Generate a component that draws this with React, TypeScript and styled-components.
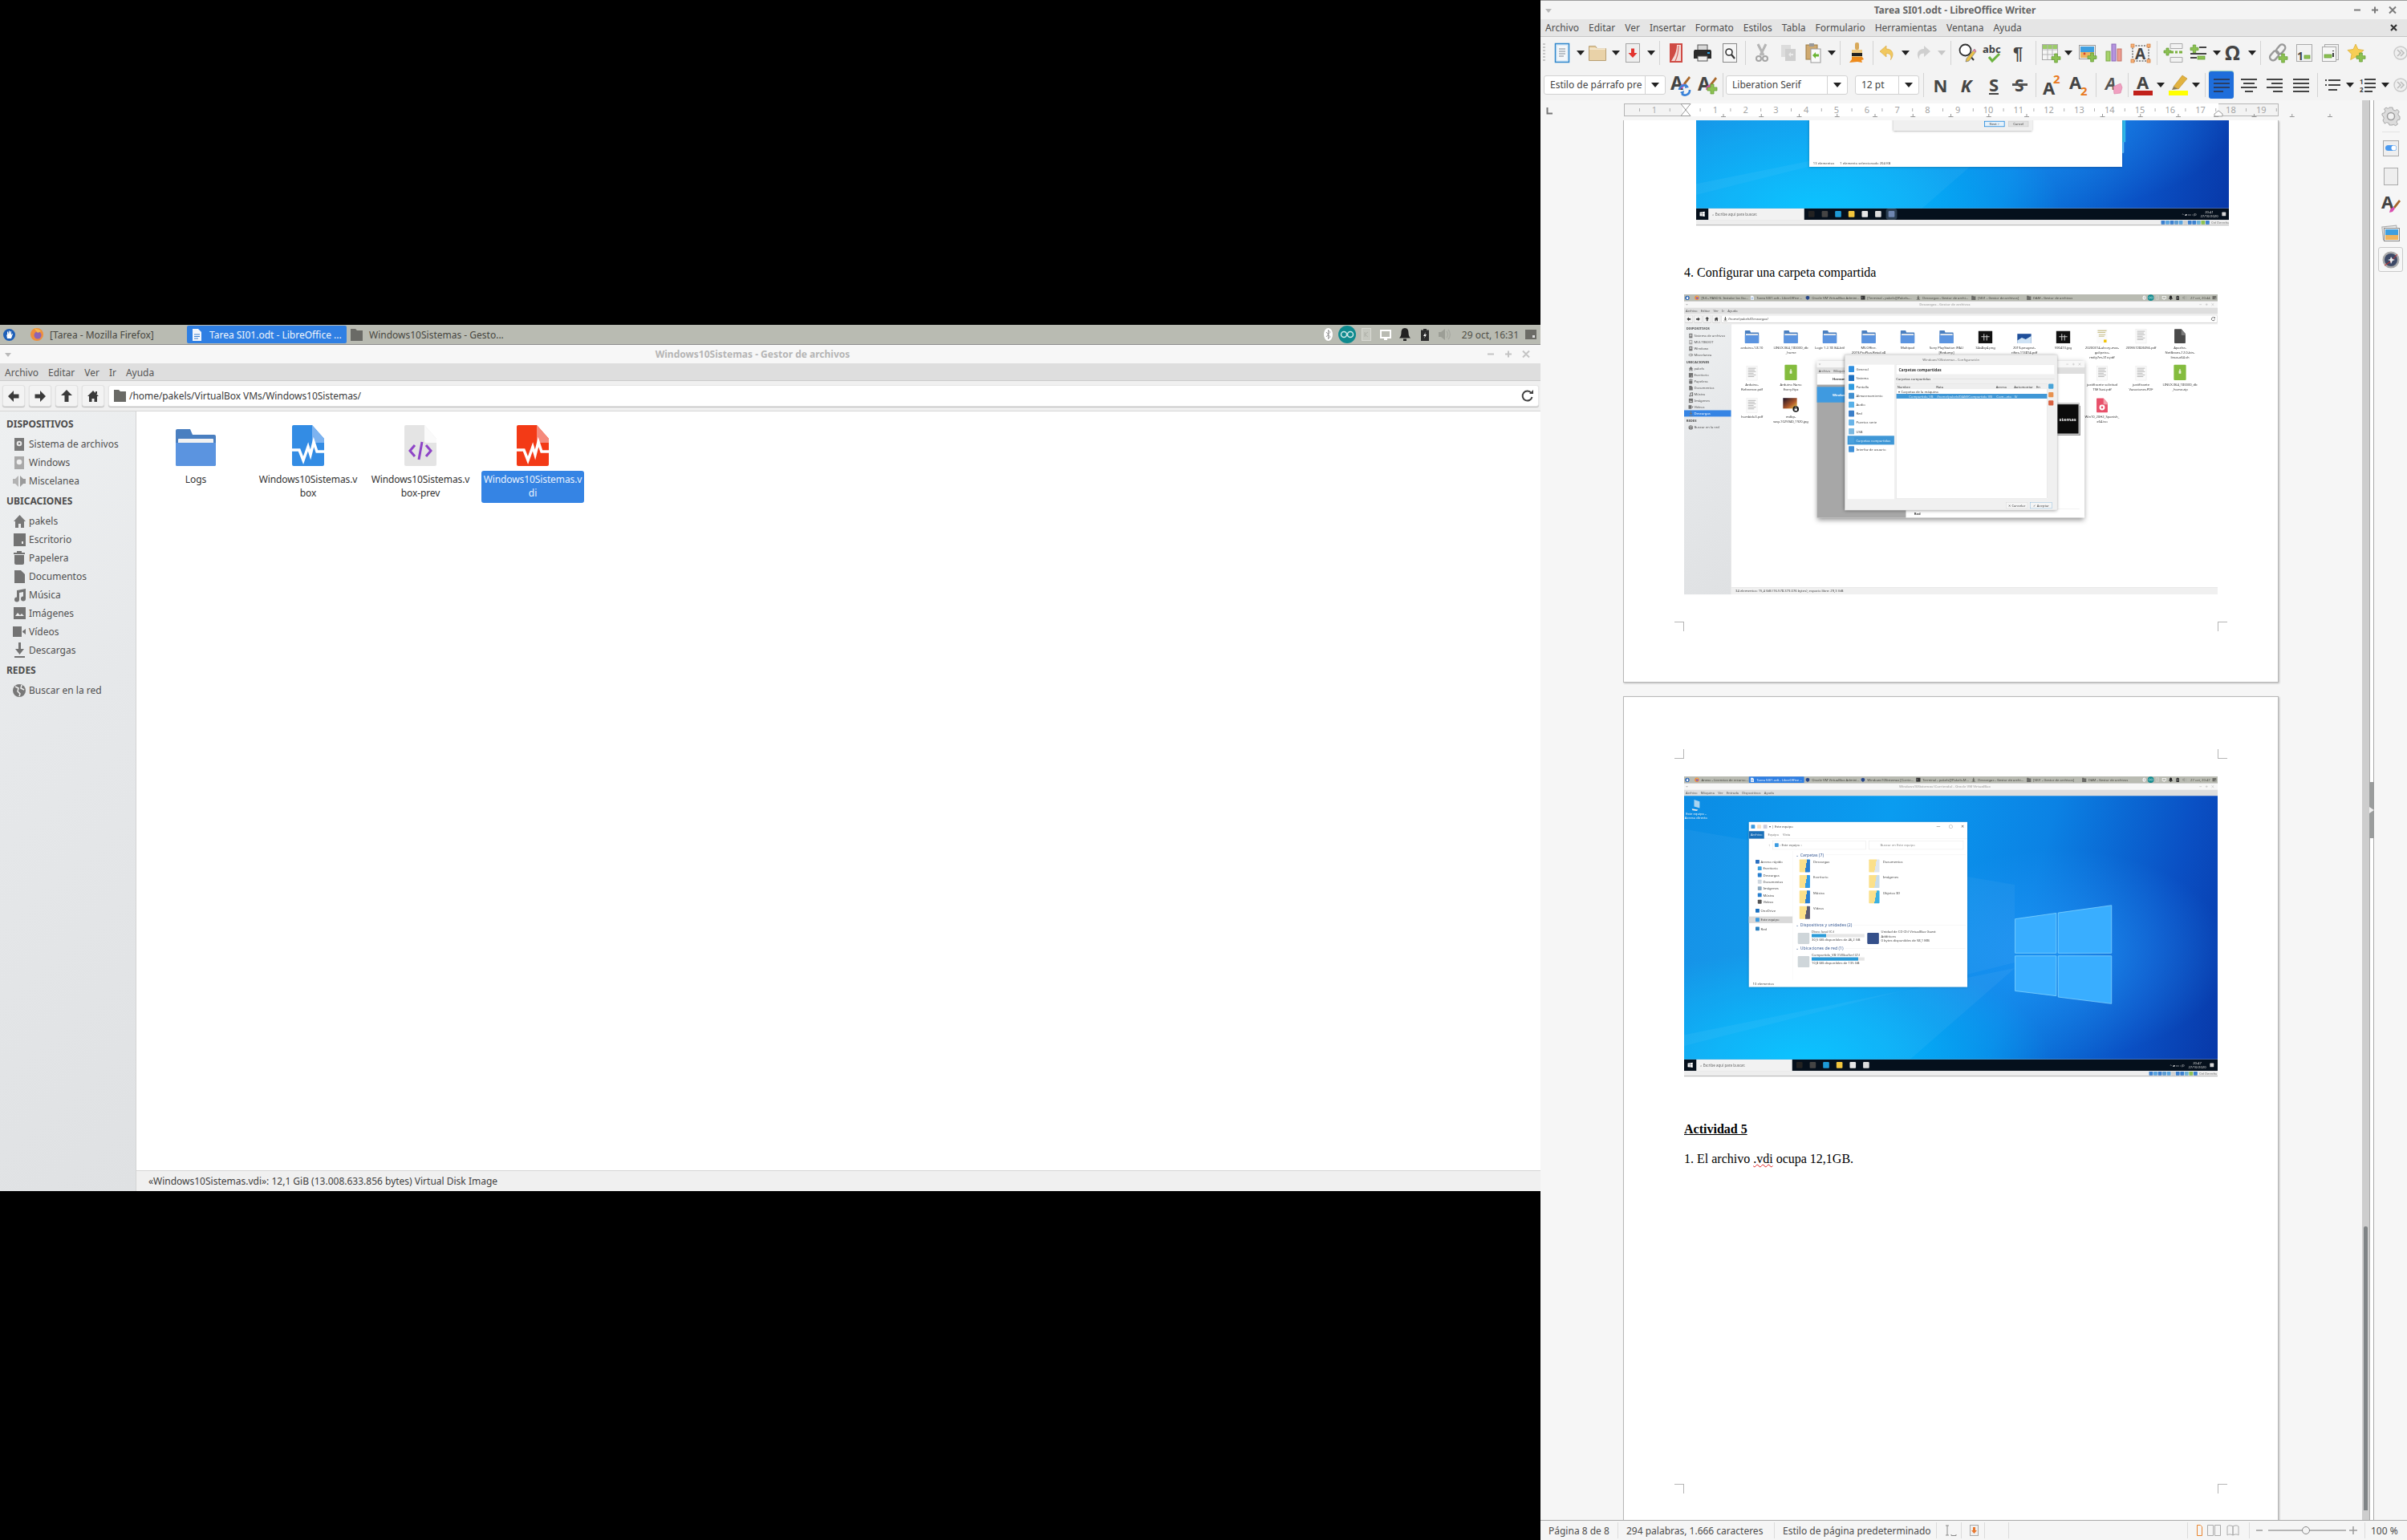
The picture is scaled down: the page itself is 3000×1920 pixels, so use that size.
import React from 'react';
import styled, { createGlobalStyle } from 'styled-components';

const Global = createGlobalStyle`
  html, body { margin: 0; padding: 0; background: #000; }
  body { width: 3000px; height: 1920px; overflow: hidden; font-family: "Noto Sans", sans-serif; font-size: 12px; }
  * { box-sizing: border-box; }
  svg { display: block; flex: none; overflow: visible; }
`;

/* ------------- generic svg ------------- */
const Svg: React.FC<{ w: number; h: number; children?: React.ReactNode }> = ({ w, h, children }) => (
  <svg width={w} height={h} viewBox={`0 0 ${w} ${h}`}>{children}</svg>
);
const Plus: React.FC<{ x: number; y: number; s?: number }> = ({ x, y, s = 11 }) => (
  <path d={`M${x + s * 0.33} ${y}h${s * 0.34}v${s * 0.33}h${s * 0.33}v${s * 0.34}h${-s * 0.33}v${s * 0.33}h${-s * 0.34}v${-s * 0.33}h${-s * 0.33}v${-s * 0.34}h${s * 0.33}z`} fill="#8cc152" stroke="#5f9a2e" strokeWidth=".7" />
);
const Minus: React.FC<{ x: number; y: number; w: number }> = ({ x, y, w }) => (
  <rect x={x} y={y} width={w} height="4" fill="#8cc152" stroke="#5f9a2e" strokeWidth=".7" />
);
const Brush: React.FC<{ x: number; y: number }> = ({ x, y }) => (
  <g transform={`translate(${x} ${y})`}>
    <path d="M12 0 L5 9 L7 11 L14 2Z" fill="#a8672a" />
    <path d="M5 9 L1 12 L0 16 L4 15 L7 11Z" fill="#d94fb0" />
  </g>
);

/* ------------- writer toolbar icons ------------- */
const I = {
  newDoc: <Svg w={18} h={24}><rect x=".5" y=".5" width="17" height="23" fill="#dcebf7" stroke="#2f86cc" strokeWidth="1.500" /><rect x="3" y="3" width="12" height="18" fill="#f4f7fa" /><path d="M5 7h8M5 10h8M5 13h8M5 16h6" stroke="#a5afb7" strokeWidth="1.400" /></Svg>,
  open: <Svg w={22} h={20}><path d="M.5 19.500V1.500h8l2 3h11v15z" fill="#e9d2a8" stroke="#b89f74" /><path d="M1 5h20" stroke="#f7ecd8" strokeWidth="1.500" /></Svg>,
  save: <Svg w={18} h={24}><rect x=".5" y=".5" width="17" height="23" fill="#eee" stroke="#a5a5a5" /><path d="M9 18L3.500 12H7V6.500h4V12h3.500z" fill="#e3342f" /></Svg>,
  pdf: <Svg w={16} h={24}><rect width="16" height="24" fill="#cf4a44" /><path d="M9 2C9 10 6 16 2 22h12V2z" fill="#f4dad7" /><path d="M11 3c0 7-1 13-4 19" fill="none" stroke="#d8655f" strokeWidth="1.200" /></Svg>,
  print: <Svg w={22} h={20}><rect x="5" y="0" width="12" height="7" fill="#d8d8d8" stroke="#555" /><path d="M1 6h20l1 2v9H0V8z" fill="#2b2b2b" /><rect x="5" y="14" width="12" height="6" fill="#eee" stroke="#555" /><rect x="17" y="9" width="3" height="2" fill="#2fa3e6" /></Svg>,
  preview: <Svg w={18} h={24}><rect x=".5" y=".5" width="17" height="23" fill="#f6f6f6" stroke="#8a8a8a" /><circle cx="8" cy="11" r="4" fill="#fff" stroke="#333" strokeWidth="1.600" /><path d="M11 14l4 5" stroke="#333" strokeWidth="2.200" /></Svg>,
  cut: <Svg w={16} h={22}><path d="M3 0l7 14M13 0L6 14" stroke="#b5b5b5" strokeWidth="3" /><circle cx="4" cy="18" r="3" fill="none" stroke="#a5a5a5" strokeWidth="2" /><circle cx="12" cy="18" r="3" fill="none" stroke="#a5a5a5" strokeWidth="2" /></Svg>,
  copy: <Svg w={18} h={20}><rect y="0" width="12" height="15" fill="#dcdcdc" /><rect x="5" y="5" width="13" height="15" fill="#cfcfcf" /><path d="M9 12l3-3v2h3v2h-3v2z" fill="#eaeaea" /></Svg>,
  paste: <Svg w={18} h={24}><rect y="2" width="14" height="18" fill="#cfa96f" stroke="#9c7c47" /><rect x="4" y="0" width="6" height="4" fill="#999" /><rect x="6" y="7" width="12" height="17" fill="#fafafa" stroke="#999" /><path d="M8 15l4-4v2.500h4v3h-4V19z" fill="#6ab533" /></Svg>,
  brush: <Svg w={20} h={26}><rect x="8" y="0" width="5" height="9" rx="2" fill="#d8a95a" /><rect x="4" y="9" width="13" height="9" fill="#efc97f" /><rect x="4" y="13" width="13" height="4" fill="#222" /><path d="M4 18h13l2 3-3 1 1 3-6-1-10 1 3-4z" fill="#ee8b1c" /></Svg>,
  undo: <Svg w={18} h={18}><path d="M8 0L0 7l8 7V9.500c5 0 7 3 5.500 8C18.500 11 16 4 8 4z" fill="#f1c85f" stroke="#d7a63c" strokeWidth=".6" /></Svg>,
  redo: <Svg w={18} h={18}><path d="M10 0l8 7-8 7V9.500c-5 0-7 3-5.500 8C-.5 11 2 4 10 4z" fill="#cfcfcf" /></Svg>,
  find: <Svg w={22} h={24}><circle cx="8.500" cy="8.500" r="7" fill="#fff" stroke="#333" strokeWidth="1.800" /><path d="M13 14l6 7" stroke="#333" strokeWidth="2" /><path d="M20 7L10 19l-1 4 4-1L22 10z" fill="#e9c14a" stroke="#666" strokeWidth=".6" /><path d="M20 7l2 3 -2 1 -2-2z" fill="#df7fb4" /></Svg>,
  spell: <Svg w={26} h={26}><text x="0" y="13" fontFamily="Noto Sans" fontWeight="700" fontSize="13" fill="#444">abc</text><path d="M8 18l4 5 9-9" fill="none" stroke="#6cb33f" strokeWidth="3" /></Svg>,
  pilcrow: <Svg w={16} h={24}><text x="0" y="20" fontFamily="Liberation Sans" fontWeight="700" fontSize="22" fill="#444">¶</text></Svg>,
  table: <Svg w={23} h={23}><rect x=".5" y=".5" width="19" height="19" fill="#f6f6f6" stroke="#a9a9a9" /><rect x="1" y="1" width="18" height="5" fill="#9ccb6a" /><path d="M7 1v18M13 1v18M1 7h18M1 13h18" stroke="#b5b5b5" /><Plus x={12} y={12} /></Svg>,
  image: <Svg w={22} h={21}><rect x=".5" y=".5" width="20" height="17" fill="#f2f2f2" stroke="#9a9a9a" /><rect x="2" y="2" width="17" height="7" fill="#3f9fe0" /><rect x="2" y="9" width="17" height="7" fill="#efb45f" /><circle cx="7" cy="11" r="1.400" fill="#d8432f" /><Plus x={11} y={10} /></Svg>,
  chart: <Svg w={20} h={22}><rect x="0" y="9" width="5" height="12" fill="#a6d26a" stroke="#7aa746" /><rect x="7" y="0" width="5" height="21" fill="#b594de" stroke="#8a69ba" /><rect x="14" y="6" width="5" height="15" fill="#ed9c90" stroke="#c47467" /></Svg>,
  box: <Svg w={24} h={23}><rect x="2" y="2" width="20" height="19" fill="none" stroke="#333" strokeDasharray="2 1.500" /><text x="5" y="19" fontFamily="Noto Sans" fontWeight="700" fontSize="19" fill="#444">A</text>{[[0, 0], [20, 0], [0, 19], [20, 19]].map(([x, y], i) => <rect key={i} x={x} y={y} width="4" height="4" fill="#f6b27a" stroke="#d47a36" strokeWidth=".7" />)}</Svg>,
  pb: <Svg w={24} h={24}><path d="M8 .5h15v6H8zM8 17.500h15v6H8z" fill="#f2f2f2" stroke="#aaa" /><Plus x={0} y={6} s={9} /><path d="M9 11h3M14 11h3M19 11h4" stroke="#7cb13f" strokeWidth="3" /></Svg>,
  field: <Svg w={20} h={20}><Plus x={0} y={0} s={10} /><path d="M11 3h9M0 11h20" stroke="#444" strokeWidth="2" /><path d="M0 16h8" stroke="#444" strokeWidth="2" /><Minus x={9} y={14} w={9} /></Svg>,
  omega: <Svg w={20} h={24}><text x="-1" y="21" fontFamily="Noto Sans" fontWeight="700" fontSize="25" fill="#444">Ω</text></Svg>,
  link: <Svg w={23} h={23}><g fill="none" stroke="#999" strokeWidth="2.400"><rect x="11" y="0" width="8" height="13" rx="4" transform="rotate(40 15 6)" /><rect x="3" y="8" width="8" height="13" rx="4" transform="rotate(40 7 14)" /></g><Plus x={12} y={12} /></Svg>,
  footnote: <Svg w={20} h={22}><rect x=".5" y=".5" width="19" height="21" fill="#f2f2f2" stroke="#aaa" /><text x="1" y="20" fontFamily="Noto Sans" fontWeight="700" fontSize="14" fill="#444">1</text><Minus x={10} y={14} w={7} /></Svg>,
  endnote: <Svg w={21} h={22}><rect x="3.500" y=".5" width="17" height="19" fill="#eee" stroke="#aaa" /><rect x=".5" y="3.500" width="17" height="18" fill="#f6f6f6" stroke="#aaa" /><Minus x={3} y={13} w={9} /><path d="M14 8v1M14 11v5" stroke="#444" strokeWidth="2" /></Svg>,
  star: <Svg w={22} h={22}><path d="M10 0l3 6.500 7 1-5 5 1.300 7L10 16l-6.300 3.500L5 12.500l-5-5 7-1z" fill="#f7ce55" stroke="#d9a92d" strokeWidth=".7" /><Plus x={11} y={11} /></Svg>,
  more: <Svg w={18} h={18}><circle cx="9" cy="9" r="8" fill="#efefef" stroke="#c9c9c9" strokeWidth="1.400" /><path d="M5 5l4 4-4 4M9 5l4 4-4 4" fill="none" stroke="#bdbdbd" strokeWidth="1.600" /></Svg>,
  updStyle: <Svg w={25} h={26}><text x="0" y="19" fontFamily="Noto Sans" fontWeight="700" fontSize="23" fill="#444">A</text><Brush x={11} y={2} /><path d="M11 19a6 6 0 0 1 10-4M24 19a6 6 0 0 1-10 5" fill="none" stroke="#3a82d8" strokeWidth="2.600" /><path d="M19 11l4 5-5 1zM16 26l-4-4 5-2z" fill="#3a82d8" /></Svg>,
  newStyle: <Svg w={24} h={24}><text x="0" y="19" fontFamily="Noto Sans" fontWeight="700" fontSize="23" fill="#444">A</text><Brush x={10} y={2} /><Plus x={12} y={11} s={12} /></Svg>,
  strike: <Svg w={19} h={22}><text x="3" y="19" fontFamily="Noto Sans" fontWeight="700" fontSize="21" fill="#444">S</text><rect y="9" width="19" height="3" fill="#555" /></Svg>,
  sup: <Svg w={23} h={26}><text x="0" y="25" fontFamily="Noto Sans" fontWeight="700" fontSize="22" fill="#444">A</text><text x="13" y="11" fontFamily="Noto Sans" fontWeight="700" fontSize="15" fill="#e8791c">2</text></Svg>,
  sub: <Svg w={25} h={26}><text x="0" y="18" fontFamily="Noto Sans" fontWeight="700" fontSize="22" fill="#444">A</text><text x="14" y="26" fontFamily="Noto Sans" fontWeight="700" fontSize="15" fill="#e8791c">2</text></Svg>,
  clear: <Svg w={22} h={24}><text x="1" y="18" fontFamily="Noto Sans" fontWeight="700" fontStyle="italic" fontSize="21" fill="#555">A</text><path d="M11 14l9-4 2 5-2 7-8 1z" fill="#f09fc0" stroke="#d67aa0" strokeWidth=".6" /></Svg>,
  color: <Svg w={24} h={26}><text x="4" y="18" fontFamily="Noto Sans" fontWeight="700" fontSize="22" fill="#444">A</text><rect y="20" width="24" height="6" fill="#c1201a" /></Svg>,
  high: <Svg w={24} h={26}><path d="M6 15L17 1l6 4-11 13z" fill="#e2b23f" stroke="#b78a24" strokeWidth=".6" /><path d="M4 19l2-4 6 3z" fill="#8a7a50" /><rect y="20" width="24" height="6" fill="#ffff00" /></Svg>,
  caret: <Svg w={10} h={6}><path d="M0 0h10L5 6z" fill="#222" /></Svg>,
  caretGrey: <Svg w={10} h={6}><path d="M0 0h10L5 6z" fill="#c7c7c7" /></Svg>,
  bullets: <Svg w={20} h={18}><path d="M5 3h15M5 9h15M5 15h11" stroke="#444" strokeWidth="2" /><path d="M1 2h2v2H1zM1 8h2v2H1z" fill="#444" /></Svg>,
  numbers: <Svg w={20} h={20}><text x="0" y="9" fontFamily="Noto Sans" fontWeight="700" fontSize="8" fill="#444">1</text><text x="0" y="19" fontFamily="Noto Sans" fontWeight="700" fontSize="8" fill="#444">2</text><path d="M6 3h14M6 8h14M6 13h14M6 18h10" stroke="#444" strokeWidth="2" /></Svg>,
  gear: <Svg w={22} h={22}><path d="M9 0h4l.7 3 2.600 1 2.500-1.500 2.500 2.800L19.700 8l1 2.500 1.300.5v4l-3 .7-1 2.500 1.500 2.500-2.800 2-2.200-1.300-2.500.6H9l-.7-2.400-2.600-1-2.500 1.500L1 16l1.300-2.500-1-2.600L0 10V7.500l3-.8 1-2.600L2.500 1.900 5 .1l2.400 1.300z" fill="#dcdcdc" stroke="#a8a8a8" /><circle cx="11" cy="11" r="4.500" fill="#f2f2f2" stroke="#9c9c9c" strokeWidth="1.500" /></Svg>,
  toggle: <Svg w={20} h={20}><rect x=".5" y=".5" width="19" height="19" fill="#eee" stroke="#aaa" /><rect x="3" y="6" width="14" height="7" rx="3.500" fill="#4a9af0" /><circle cx="13.500" cy="9.500" r="3" fill="#fff" /></Svg>,
  page: <Svg w={18} h={22}><rect x=".5" y=".5" width="17" height="21" fill="#eee" stroke="#aaa" /></Svg>,
  deckStyle: <Svg w={24} h={24}><text x="0" y="17" fontFamily="Noto Sans" fontWeight="700" fontSize="22" fill="#444">A</text><Brush x={10} y={6} /></Svg>,
  gallery: <Svg w={22} h={22}><rect x=".5" y="3" width="18" height="16" fill="#eee" stroke="#aaa" transform="rotate(-6 10 10)" /><rect x="2.500" y="5.500" width="19" height="16" fill="#f0f0f0" stroke="#888" /><rect x="4" y="7" width="16" height="7" fill="#3f9fe0" /><rect x="4" y="14" width="16" height="6" fill="#efb45f" /></Svg>,
  nav: <Svg w={22} h={22}><circle cx="11" cy="11" r="10.500" fill="#aaa" /><circle cx="11" cy="11" r="8" fill="#3d4966" /><path d="M19 4L12 12 3 18" fill="none" stroke="#cc2b2b" /><path d="M11 7l2 3 3 1-3 1-2 4-1-4-3-1 3-1z" fill="#eee" /></Svg>,
};

/* ------------- file icons ------------- */
const Wave = <path d="M0 31h9l5 13 6-17 3 10 4-16 4 12h9" fill="none" stroke="#fff" strokeWidth="3.500" />;
const DocShape: React.FC<{ c: string; f: string; children?: React.ReactNode }> = ({ c, f, children }) => (
  <svg width="40" height="51" viewBox="0 0 40 51">
    <path d="M2 0h23l15 17v32a2 2 0 0 1-2 2H2a2 2 0 0 1-2-2V2a2 2 0 0 1 2-2z" fill={c} />
    <path d="M25 0l15 17v5H27a2 2 0 0 1-2-2z" fill={f} />
    {children}
  </svg>
);
const FolderBig = (
  <svg width="50" height="46" viewBox="0 0 50 46">
    <path d="M2 0h16l3 7h27a2 2 0 0 1 2 2v35a2 2 0 0 1-2 2H2a2 2 0 0 1-2-2V2a2 2 0 0 1 2-2z" fill="#4a7fc0" />
    <rect x="3" y="12" width="44" height="9" rx="1" fill="#f2f2f2" />
    <path d="M0 17h50v27a2 2 0 0 1-2 2H2a2 2 0 0 1-2-2z" fill="#5b94e0" />
  </svg>
);
const fileIcons: Record<string, React.ReactNode> = {
  folder: FolderBig,
  vbox: <DocShape c="#338ce4" f="#7db3f0">{Wave}</DocShape>,
  vdi: <DocShape c="#f33a16" f="#f58a7c">{Wave}</DocShape>,
  prev: <DocShape c="#e4e4e4" f="#fafafa"><path d="M13 25l-6 7 6 7M27 25l6 7-6 7" fill="none" stroke="#8e44c7" strokeWidth="3" /><path d="M22 21l-4 22" stroke="#8e44c7" strokeWidth="3" /></DocShape>,
  page: <svg width="40" height="51" viewBox="0 0 40 51"><rect x="1" y="0" width="38" height="51" fill="#fafafa" stroke="#ddd" /><path d="M6 8h28M6 14h24M6 20h28M6 26h20M6 32h28M6 38h22" stroke="#9a9a9a" strokeWidth="2" /></svg>,
  yellow: <svg width="40" height="51" viewBox="0 0 40 51"><rect x="1" y="0" width="38" height="51" fill="#fafafa" /><path d="M4 6h32M4 12h28M8 20h24M8 26h20" stroke="#c9c08a" strokeWidth="3" /><rect x="26" y="38" width="10" height="10" fill="#f2c300" /></svg>,
  dark: <svg width="50" height="44" viewBox="0 0 50 44"><rect width="50" height="44" fill="#111" /><path d="M10 20h30M20 10v24M30 14v20" stroke="#ccc" strokeWidth="3" /></svg>,
  blue: <svg width="50" height="34" viewBox="0 0 50 34"><rect width="50" height="34" fill="#1f4f9a" /><path d="M0 24l16-10 14 6 20-12v26H0z" fill="#cfe3f5" /></svg>,
  script: <DocShape c="#4a4a4a" f="#7a7a7a" />,
  green: <svg width="44" height="56" viewBox="0 0 44 56"><rect width="44" height="56" rx="3" fill="#84bc3e" /><rect x="20" y="16" width="4" height="16" fill="#e8f2d8" /><rect x="18" y="22" width="8" height="10" fill="#e8f2d8" /></svg>,
  pink: <DocShape c="#e8506a" f="#f2a0ac"><circle cx="20" cy="33" r="10" fill="#fff" /><circle cx="20" cy="33" r="4" fill="#e8506a" /></DocShape>,
  lock: <svg width="56" height="52" viewBox="0 0 56 52"><defs><linearGradient id="lk" x1="0" y1="0" x2="1" y2="1"><stop offset="0" stopColor="#1a1026" /><stop offset=".6" stopColor="#b25a2a" /><stop offset="1" stopColor="#e6cf52" /></linearGradient></defs><rect width="50" height="38" fill="url(#lk)" /><circle cx="46" cy="40" r="11" fill="#111" /><rect x="41" y="38" width="10" height="8" fill="#eee" /><path d="M43 38v-3a3 3 0 0 1 6 0v3" fill="none" stroke="#eee" strokeWidth="1.600" /></svg>,
  none: null,
};

/* ------------- sidebar icons ------------- */
const sideIcons: Record<string, React.ReactNode> = {
  disk: <Svg w={14} h={16}><path d="M1 0h12v16H1z" fill="#787878" /><circle cx="7" cy="7" r="3.300" fill="#e8e8e8" /><circle cx="7" cy="7" r="1.200" fill="#787878" /></Svg>,
  diskLight: <Svg w={14} h={16}><path d="M1 0h12v16H1z" fill="#a9a9a9" /><circle cx="7" cy="7" r="3.300" fill="#eee" /></Svg>,
  speaker: <Svg w={16} h={16}><path d="M7 1v14L3 11H0V5h3z" fill="#b3b3b3" /><path d="M9 1v14l4-4h3V5h-3z" fill="#9b9b9b" /></Svg>,
  home: <Svg w={15} h={16}><path d="M7.500 0L15 8h-2v8H9v-5H6v5H2V8H0z" fill="#787878" /></Svg>,
  desk: <Svg w={15} h={16}><rect width="15" height="16" fill="#737373" /><rect x="10" y="10" width="2" height="3" fill="#eee" /></Svg>,
  trash: <Svg w={14} h={17}><rect x="4" y="0" width="6" height="2" fill="#737373" /><rect y="2" width="14" height="2" fill="#737373" /><path d="M1 5h12v10a2 2 0 0 1-2 2H3a2 2 0 0 1-2-2z" fill="#737373" /></Svg>,
  doc: <Svg w={13} h={16}><path d="M0 0h8l5 5v11H0z" fill="#737373" /></Svg>,
  music: <Svg w={15} h={16}><path d="M4 2l11-2v12h-3V4L7 5v9H4z" fill="#737373" /><circle cx="4" cy="13.500" r="3" fill="#737373" /><circle cx="12" cy="12.500" r="3" fill="#737373" /></Svg>,
  img: <Svg w={15} h={15}><rect width="15" height="15" fill="#737373" /><path d="M2 11l3-4 3 3 2-2 3 3z" fill="#eee" /></Svg>,
  video: <Svg w={16} h={13}><rect width="11" height="13" fill="#737373" /><path d="M12 6l4-3v7l-4-3z" fill="#737373" /></Svg>,
  down: <Svg w={13} h={19}><path d="M5 0h3v8h4l-5.500 7L1 8h4z" fill="#737373" /><rect y="17" width="13" height="2" fill="#737373" /></Svg>,
  globe: <Svg w={16} h={16}><circle cx="8" cy="8" r="8" fill="#787878" /><path d="M3 3l4 2-1 4 3 3-1 3M11 1l-1 4 4 2" fill="none" stroke="#eee" strokeWidth="1.500" /></Svg>,
};

/* ------------- panel ------------- */
const PanelBar = styled.div`
  height: 25px; flex: none; display: flex; align-items: center; padding: 0 5px 0 4px;
  background: #b9bbb2; border-bottom: 1px solid #8d8d8d; font-size: 12px; color: #474741;
`;
const StartBtn = styled.div`width: 15px; margin-right: 15px; flex: none;`;
const Task = styled.div<{ $active?: boolean }>`
  width: 199px; height: 22px; flex: none; display: flex; align-items: center; gap: 8px; padding-left: 4px; white-space: nowrap; overflow: hidden;
  border-radius: 2px; background: ${p => (p.$active ? '#2f7fe3' : 'transparent')}; color: ${p => (p.$active ? '#f2f6fb' : '#474741')};
`;
const TaskIcon = styled.span`width: 16px; flex: none; display: flex; justify-content: center;`;
const Tray = styled.div`margin-left: auto; display: flex; align-items: center;`;
const TrayItem = styled.div<{ $ml: number }>`margin-left: ${p => p.$ml}px; flex: none; display: flex;`;
const Clock = styled.span`color: #505048; white-space: nowrap; font-size: 12px;`;

const startIcon = <Svg w={15} h={15}><circle cx="7.500" cy="7.500" r="7.500" fill="#1d5fb8" /><path d="M4 7l1 5h5l2-6-1 0-1 2V3H9v4L8 2.500H7V7L6 3.500H5V8z" fill="#fff" /></Svg>;
const ffIcon = <Svg w={16} h={16}><circle cx="8" cy="8" r="8" fill="#ef8f3c" /><circle cx="9" cy="9" r="4.500" fill="#8d63b4" /><path d="M4 0c3 1 7 1 9 4L9 6z" fill="#f5b64e" /></Svg>;
const docIcon = <Svg w={11} h={15}><path d="M0 0h7l4 4v11H0z" fill="#f3f6fb" /><path d="M2 7h7M2 9.500h7M2 12h5" stroke="#3a7fd0" /></Svg>;
const greyFolder = <Svg w={15} h={15}><path d="M0 0h6l2 2h7v13H0z" fill="#6a6a66" /></Svg>;
const vmIcon = <Svg w={15} h={15}><path d="M7.500 0L14 3v7l-6.500 5L1 10V3z" fill="#26468a" /></Svg>;
const termIcon = <Svg w={15} h={14}><rect width="15" height="14" fill="#333" /><path d="M3 4l3 3-3 3" fill="none" stroke="#fff" /></Svg>;
const dlIcon = <Svg w={13} h={15}><path d="M5 0h3v7h4L6.500 13 1 7h4zM0 13.500h13V15H0z" fill="#595954" /></Svg>;

const trayIcons = (
  <>
    <TrayItem $ml={0}><Svg w={11} h={16}><ellipse cx="5.500" cy="8" rx="5.500" ry="8" fill="#fff" /><path d="M3 5l5 6-2.500 2.500v-11L8 5 3 11" fill="none" stroke="#9a9a9a" /></Svg></TrayItem>
    <TrayItem $ml={7}><Svg w={22} h={22}><circle cx="11" cy="11" r="11" fill="#0f8a8e" /><circle cx="7" cy="11" r="3.500" fill="none" stroke="#cfe8e8" strokeWidth="1.500" /><circle cx="15" cy="11" r="3.500" fill="none" stroke="#cfe8e8" strokeWidth="1.500" /></Svg></TrayItem>
    <TrayItem $ml={7}><Svg w={12} h={16}><rect x=".5" y=".5" width="11" height="15" fill="#c6c8c0" stroke="#d8d9d3" /><path d="M4 5v6M8 5L4 8l4 3" stroke="#aeb0a8" fill="none" /></Svg></TrayItem>
    <TrayItem $ml={11}><Svg w={14} h={13}><rect x="1" y="1" width="12" height="9" fill="#b9bbb2" stroke="#fff" strokeWidth="2" /><rect x="5" y="11" width="4" height="2" fill="#fff" /></Svg></TrayItem>
    <TrayItem $ml={10}><Svg w={14} h={16}><path d="M7 0c3.500 0 4.500 3 4.500 6 0 3 1 5 2.500 6.500H0C1.500 11 2.500 9 2.500 6 2.500 3 3.500 0 7 0z" fill="#222" /><rect x="5" y="13.500" width="4" height="2.500" fill="#222" /></Svg></TrayItem>
    <TrayItem $ml={13}><Svg w={10} h={15}><path d="M3 0h4v1.500h3V15H0V1.500h3z" fill="#2d2d2d" /><path d="M6 4L3 9h2l-1 3 3-5H5z" fill="#fff" /></Svg></TrayItem>
    <TrayItem $ml={12}><Svg w={14} h={14}><path d="M0 4h3l5-4v14l-5-4H0z" fill="#9c9e96" /><path d="M10 3c2 2 2 6 0 8M12 1c3 3 3 9 0 12" fill="none" stroke="#a6a8a0" strokeWidth="1.300" /></Svg></TrayItem>
  </>
);

type TaskDef = { icon: React.ReactNode; label: string; active?: boolean };
const Panel: React.FC<{ tasks: TaskDef[]; clock: string }> = ({ tasks, clock }) => (
  <PanelBar>
    <StartBtn>{startIcon}</StartBtn>
    {tasks.map((t, i) => <Task key={i} $active={t.active}><TaskIcon>{t.icon}</TaskIcon>{t.label}</Task>)}
    <Tray>
      {trayIcons}
      <TrayItem $ml={15}><Clock>{clock}</Clock></TrayItem>
      <TrayItem $ml={8}><Svg w={14} h={12}><rect width="14" height="12" fill="#6c6c66" /><rect x="9" y="7" width="3" height="3" fill="#ddd" /></Svg></TrayItem>
    </Tray>
  </PanelBar>
);

/* ------------- window chrome ------------- */
const WinTitle = styled.div`
  height: 23px; flex: none; display: flex; align-items: center; background: #f7f7f7; padding: 0 5px 0 6px;
`;
const MenuCaret = styled.div`width: 0; height: 0; border: 4px solid transparent; border-top: 5px solid #b9b9b9; margin-top: 5px; flex: none;`;
const WinTitleText = styled.div`flex: 1; text-align: center; font-weight: 700; color: #b5b5b5; font-size: 12px; white-space: nowrap; padding-left: 9px;`;
const WinControls: React.FC<{ c?: string }> = ({ c = '#c4c4c4' }) => (
  <svg width="62" height="11" viewBox="0 0 62 11" style={{ flex: 'none' }}>
    <path d="M1 5.500h8M23 5.500h8M27 1.500v8M45 1.500l8 8M53 1.500l-8 8" stroke={c} strokeWidth="2" fill="none" />
  </svg>
);
const MenuBar = styled.div`
  height: 22px; flex: none; display: flex; align-items: center; gap: 12px; padding: 1px 0 0 6px;
  background: #dedede; border-bottom: 1px solid #cacaca; color: #555; font-size: 12px;
`;
const NavBar = styled.div`
  height: 38px; flex: none; display: flex; align-items: flex-start; gap: 5px; padding: 5px 2px 0 3px;
  background: #f0f0f0; border-bottom: 1px solid #d6d6d6;
`;
const NavBtn = styled.div`
  width: 28px; height: 27px; flex: none; display: flex; align-items: center; justify-content: center;
  background: #f3f3f3; border-radius: 3px; box-shadow: 0 1px 1px #bbb; border: 1px solid #e2e2e2;
`;
const AddrBar = styled.div`
  flex: 1; height: 27px; display: flex; align-items: center; gap: 4px; padding: 0 6px; background: #fff;
  border-radius: 3px; box-shadow: 0 1px 1px #bdbdbd; border: 1px solid #e6e6e6; color: #3c3c3c; font-size: 12px; letter-spacing: -.05px;
`;
const AddrText = styled.span`flex: 1; white-space: nowrap;`;
const navIcons = {
  back: <Svg w={14} h={14}><path d="M7 0L0 7l7 7V9.500h6.500v-5H7z" fill="#3a3a3a" /></Svg>,
  fwd: <Svg w={14} h={14}><path d="M7 0l7 7-7 7V9.500H.5v-5H7z" fill="#3a3a3a" /></Svg>,
  up: <Svg w={14} h={15}><path d="M7 0l7 7H9.500v8h-5V7H0z" fill="#3a3a3a" /></Svg>,
  home: <Svg w={14} h={14}><path d="M7 0l7 7h-2v7H8.500v-4h-3v4H2V7H0z" fill="#3a3a3a" /><rect x="10" y="1" width="2" height="3" fill="#3a3a3a" /></Svg>,
  reload: <Svg w={15} h={15}><path d="M12.500 4A6 6 0 1 0 13.500 9" fill="none" stroke="#404040" strokeWidth="2" /><path d="M10 5h5V0z" fill="#404040" /></Svg>,
};

/* ------------- file-manager screen ------------- */
const Screen = styled.div<{ $bare?: boolean }>`width: 1920px; height: 1080px; flex: none; display: flex; flex-direction: column; background: #fff; position: relative; padding-top: ${p => (p.$bare ? 70 : 0)}px;`;
const FmBody = styled.div`flex: 1; min-height: 0; display: flex;`;
const Sidebar = styled.div`
  width: 170px; flex: none; padding-top: 2px; border-right: 1px solid #d4d4d4;
  background: linear-gradient(140deg, #eef0f1 0%, #e6e8ea 40%, #dfe1e3 100%);
`;
const SideHead = styled.div`height: 27px; display: flex; align-items: center; padding-left: 8px; font-weight: 700; color: #4c4c4c; font-size: 12px;`;
const SideRow = styled.div<{ $sel?: boolean }>`
  height: 23px; display: flex; align-items: center; padding-left: 16px; color: ${p => (p.$sel ? '#fff' : '#505050')};
  background: ${p => (p.$sel ? '#3584e4' : 'transparent')}; font-size: 12px; white-space: nowrap;
`;
const SideIconBox = styled.span`width: 16px; margin-right: 4px; flex: none; display: flex; justify-content: center;`;
const FmMain = styled.div`flex: 1; min-width: 0; display: flex; flex-direction: column; background: #fff;`;
const FileGrid = styled.div`
  flex: 1; min-height: 0; padding: 16px 0 0 10px; display: grid; grid-template-columns: repeat(auto-fill, 128px);
  column-gap: 12px; row-gap: 18px; align-content: start;
`;
const FileCell = styled.div`display: flex; flex-direction: column; align-items: center;`;
const FileIconBox = styled.div`height: 52px; width: 100%; display: flex; align-items: flex-end; justify-content: center; margin-bottom: 6px;`;
const FileLabel = styled.div<{ $sel?: boolean }>`
  width: 128px; padding: 2px 0 4px; border-radius: 3px; text-align: center; font-size: 12px; line-height: 17px; white-space: pre; letter-spacing: -.1px; color: ${p => (p.$sel ? '#eaf2fd' : '#333')};
  background: ${p => (p.$sel ? '#3584e4' : 'transparent')};
`;
const StatusBar = styled.div`
  height: 26px; flex: none; display: flex; align-items: center; padding-left: 15px; background: #f0f0f0; border-top: 1px solid #d6d6d6; color: #404040; font-size: 12px;
`;

type FileDef = { i: string; l?: string; sel?: boolean };
type SideDef = { h?: string; i?: string; l?: string; sel?: boolean };

const FileManager: React.FC<{
  tasks: TaskDef[]; clock: string; title: string; path: string; pathIcon: React.ReactNode; side: SideDef[]; files: FileDef[]; status: string; children?: React.ReactNode;
}> = ({ tasks, clock, title, path, pathIcon, side, files, status, children }) => (
  <Screen>
    <Panel tasks={tasks} clock={clock} />
    <WinTitle><MenuCaret /><WinTitleText>{title}</WinTitleText><WinControls /></WinTitle>
    <MenuBar>{['Archivo', 'Editar', 'Ver', 'Ir', 'Ayuda'].map(m => <span key={m}>{m}</span>)}</MenuBar>
    <NavBar>
      <NavBtn>{navIcons.back}</NavBtn><NavBtn>{navIcons.fwd}</NavBtn><NavBtn>{navIcons.up}</NavBtn><NavBtn>{navIcons.home}</NavBtn>
      <AddrBar>{pathIcon}<AddrText>{path}</AddrText>{navIcons.reload}</AddrBar>
    </NavBar>
    <FmBody>
      <Sidebar>
        {side.map((s, i) => s.h ? <SideHead key={i}>{s.h}</SideHead> : (
          <SideRow key={i} $sel={s.sel}><SideIconBox>{sideIcons[s.i as string]}</SideIconBox>{s.l}</SideRow>
        ))}
      </Sidebar>
      <FmMain>
        <FileGrid>
          {files.map((f, i) => (
            <FileCell key={i}>
              <FileIconBox>{fileIcons[f.i]}</FileIconBox>
              <FileLabel $sel={f.sel}>{f.l}</FileLabel>
            </FileCell>
          ))}
        </FileGrid>
        <StatusBar>{status}</StatusBar>
      </FmMain>
    </FmBody>
    {children}
  </Screen>
);

const placesBase: SideDef[] = [
  { h: 'UBICACIONES' }, { i: 'home', l: 'pakels' }, { i: 'desk', l: 'Escritorio' }, { i: 'trash', l: 'Papelera' }, { i: 'doc', l: 'Documentos' },
  { i: 'music', l: 'Música' }, { i: 'img', l: 'Imágenes' }, { i: 'video', l: 'Vídeos' },
];
const mainSide: SideDef[] = [
  { h: 'DISPOSITIVOS' }, { i: 'disk', l: 'Sistema de archivos' }, { i: 'diskLight', l: 'Windows' }, { i: 'speaker', l: 'Miscelanea' },
  ...placesBase, { i: 'down', l: 'Descargas' }, { h: 'REDES' }, { i: 'globe', l: 'Buscar en la red' },
];
const miniSide: SideDef[] = [
  { h: 'DISPOSITIVOS' }, { i: 'disk', l: 'Sistema de archivos' }, { i: 'diskLight', l: 'MULTIBOOT' }, { i: 'disk', l: 'Windows' }, { i: 'speaker', l: 'Miscelanea' },
  ...placesBase, { i: 'down', l: 'Descargas', sel: true }, { h: 'REDES' }, { i: 'globe', l: 'Buscar en la red' },
];
const miniFiles: FileDef[] = [
  { i: 'folder', l: 'arduino-1.8.10' }, { i: 'folder', l: 'LINUX.X64_180000_db\n_home' }, { i: 'folder', l: 'Logic 1.2.18 (64-bit)' }, { i: 'folder', l: 'MS.Office.\n2019.ProPlus.Retail.x8' },
  { i: 'folder', l: 'Multipad' }, { i: 'folder', l: 'Sony PlayStation (PAL)\n[Redump]' }, { i: 'dark', l: '34x4by4.png' }, { i: 'blue', l: '2019-peugeot-\nrifter-113814.pdf' },
  { i: 'dark', l: '590413.jpg' }, { i: 'yellow', l: '20200314-alcory-mas-\ngalipeiso-\nmdiy7m-31e.pdf' }, { i: 'page', l: '2095572826056.pdf' }, { i: 'script', l: 'Apache-\nNetBeans-12.0-bin-\nlinux-x64.sh' },
  { i: 'page', l: 'Arduino-\nReference.pdf' }, { i: 'green', l: 'Arduino Nano\nEvery.ftpz' }, { i: 'none' }, { i: 'none' }, { i: 'none' }, { i: 'none' }, { i: 'none' }, { i: 'none' }, { i: 'none' },
  { i: 'page', l: 'justificante solicitud\nTSE Susi.pdf' }, { i: 'page', l: 'justificante\nVacaciones.PDF' }, { i: 'green', l: 'LINUX.X64_180000_db\n_home.zip' },
  { i: 'page', l: 'hombido3.pdf' }, { i: 'lock', l: 'mdbp-\nway-1025940_1920.jpg' }, { i: 'none' }, { i: 'none' }, { i: 'none' }, { i: 'none' }, { i: 'none' }, { i: 'none' }, { i: 'none' },
  { i: 'pink', l: 'Win10_20H2_Spanish_\nx64.iso' },
];

/* ------------- nested screenshots ------------- */
const Shot = styled.div<{ $w: number; $h: number; $ml?: number; $mt?: number }>`
  width: ${p => p.$w}px; height: ${p => p.$h}px; margin-left: ${p => p.$ml || 0}px; margin-top: ${p => p.$mt || 0}px; flex: none; overflow: hidden;
`;
const ShotInner = styled.div<{ $shift?: number }>`
  width: 1920px; height: 1083px; transform: translateY(${p => p.$shift || 0}px) scale(.3464); transform-origin: 0 0; filter: blur(1.1px); font-size: 12px; color: #333; background: #fff;
`;

/* VirtualBox settings dialog over the file manager */
const VmWindow = styled.div`
  position: absolute; left: 478px; top: 240px; width: 963px; height: 564px; display: flex; flex-direction: column; background: #fff; box-shadow: 0 6px 18px rgba(0,0,0,.45);
`;
const VmBody = styled.div`flex: 1; display: flex; min-height: 0;`;
const VmList = styled.div`width: 320px; background: #a7a7a7; display: flex; flex-direction: column;`;
const VmItem = styled.div<{ $sel?: boolean }>`
  height: ${p => (p.$sel ? 56 : 40)}px; margin-top: ${p => (p.$sel ? 8 : 0)}px; padding-left: 56px; display: flex; align-items: center; font-weight: 700;
  background: ${p => (p.$sel ? '#3f9ae0' : '#fff')}; color: ${p => (p.$sel ? '#fff' : '#333')};
`;
const VmRight = styled.div`flex: 1; display: flex; flex-direction: column; align-items: flex-end; padding: 107px 18px 0 0;`;
const VmPreview = styled.div`
  width: 92px; height: 113px; background: #0b0b0b; border: 4px solid #cfcfcf; box-shadow: 2px 3px 2px #999; display: flex; align-items: center; justify-content: flex-end; padding-right: 8px; color: #eee; font-weight: 700; font-size: 17px; overflow: hidden;
`;
const VmFoot = styled.div`margin-top: auto; align-self: stretch; height: 32px; padding-left: 30px; border-top: 1px solid #ddd; display: flex; align-items: center; font-weight: 700;`;
const Dialog = styled.div`
  position: absolute; left: 578px; top: 217px; width: 765px; height: 560px; display: flex; flex-direction: column; background: #f0f0f0; box-shadow: 0 3px 12px rgba(0,0,0,.5); border: 1px solid #ccc;
`;
const DlgTitle = styled.div`height: 32px; flex: none; display: flex; align-items: center; justify-content: center; color: #6e6e6e;`;
const DlgBody = styled.div`flex: 1; min-height: 0; display: flex; gap: 7px; padding: 3px 9px 0;`;
const DlgList = styled.div`width: 168px; height: 484px; background: #fff;`;
const DlgItem = styled.div<{ $sel?: boolean }>`
  height: 32px; display: flex; align-items: center; gap: 7px; padding-left: 4px; white-space: nowrap; background: ${p => (p.$sel ? '#3f97d6' : 'transparent')}; color: ${p => (p.$sel ? '#e4f1fa' : '#444')};
`;
const DlgIco = styled.span<{ $c: string }>`width: 20px; height: 22px; background: ${p => p.$c}; flex: none; border-radius: 2px;`;
const DlgRight = styled.div`flex: 1; display: flex; flex-direction: column;`;
const DlgHeader = styled.div`height: 36px; display: flex; align-items: center; padding-left: 8px; background: #fff; font-weight: 700; font-size: 14px; border: 1px solid #e2e2e2;`;
const DlgGroup = styled.div`height: 33px; display: flex; align-items: center; gap: 8px; white-space: nowrap; &::after { content: ""; flex: 1; height: 1px; background: #ccc; }`;
const DlgTableRow = styled.div`display: flex; flex: 1; gap: 4px; min-height: 0;`;
const DlgTable = styled.div`flex: 1; height: 414px; background: #fff; border: 1px solid #ccc;`;
const DlgCols = styled.div`height: 18px; display: grid; grid-template-columns: 140px 215px 65px 80px 1fr; background: #eee; padding-left: 3px; align-items: center;`;
const DlgGroupRow = styled.div`height: 17px; padding-left: 8px; display: flex; align-items: center;`;
const DlgSelRow = styled.div`height: 17px; background: #3f97d6; color: #dcecf8; display: grid; grid-template-columns: 100px 215px 65px 1fr; align-items: center; padding-left: 45px; white-space: nowrap;`;
const DlgSideBtns = styled.div`width: 22px; display: flex; flex-direction: column; gap: 12px;`;
const DlgSideBtn = styled.span<{ $c: string }>`width: 18px; height: 18px; border-radius: 3px; background: ${p => p.$c};`;
const DlgFoot = styled.div`height: 34px; flex: none; display: flex; justify-content: flex-end; align-items: center; gap: 10px; padding-right: 9px;`;
const DlgBtn = styled.div<{ $on?: boolean }>`width: 78px; height: 23px; display: flex; align-items: center; justify-content: center; border: 1px solid ${p => (p.$on ? '#6aa9d8' : '#cfcfcf')}; background: #f5f5f5; color: #444;`;

const SettingsOverlay = () => (
  <>
    <VmWindow>
      <WinTitle><MenuCaret /><WinTitleText /><WinControls /></WinTitle>
      <MenuBar><span>Archivo</span><span>Máquina</span><span>Ayuda</span></MenuBar>
      <VmBody>
        <VmList>
          <VmItem>Herramientas</VmItem>
          <VmItem $sel>Windows10Sistemas</VmItem>
        </VmList>
        <VmRight>
          <VmPreview>stemas</VmPreview>
          <VmFoot>Red</VmFoot>
        </VmRight>
      </VmBody>
    </VmWindow>
    <Dialog>
      <DlgTitle>Windows10Sistemas - Configuración</DlgTitle>
      <DlgBody>
        <DlgList>
          {[['General', '#2f8fe0'], ['Sistema', '#1f70c0'], ['Pantalla', '#2f9be0'], ['Almacenamiento', '#3f8fd0'], ['Audio', '#58b0e8'], ['Red', '#3a7ec8'], ['Puertos serie', '#6ab4e8'], ['USB', '#7ab8e0'], ['Carpetas compartidas', '#4aa0dc'], ['Interfaz de usuario', '#3f90d8']].map(([l, c], i) => (
            <DlgItem key={l} $sel={i === 8}><DlgIco $c={c} />{l}</DlgItem>
          ))}
        </DlgList>
        <DlgRight>
          <DlgHeader>Carpetas compartidas</DlgHeader>
          <DlgGroup>Carpetas compartidas</DlgGroup>
          <DlgTableRow>
            <DlgTable>
              <DlgCols><span>Nombre</span><span>Ruta</span><span>Acceso</span><span>Automontar</span><span>En</span></DlgCols>
              <DlgGroupRow>▾ Carpetas de la máquina</DlgGroupRow>
              <DlgSelRow><span>Compartido_VB</span><span>/home/pakels/DAM/Compartido VB</span><span>Com...eto</span><span>Sí</span></DlgSelRow>
            </DlgTable>
            <DlgSideBtns><DlgSideBtn $c="#49a4d8" /><DlgSideBtn $c="#e8924f" /><DlgSideBtn $c="#d8603f" /></DlgSideBtns>
          </DlgTableRow>
          <DlgFoot><DlgBtn>✕ Cancelar</DlgBtn><DlgBtn $on>✓ Aceptar</DlgBtn></DlgFoot>
        </DlgRight>
      </DlgBody>
    </Dialog>
  </>
);

/* Windows desktop inside VirtualBox */
const Wallpaper = styled.div`
  flex: 1; min-height: 0; position: relative; overflow: hidden;
  background:
    radial-gradient(ellipse 62% 55% at 22% 100%, #00c0ff 0%, rgba(0,190,255,0) 75%),
    radial-gradient(ellipse 40% 50% at 70% 60%, rgba(40,160,255,.6) 0%, rgba(40,160,255,0) 80%),
    linear-gradient(105deg, #0c8ce4 0%, #0a9cf0 35%, #0b82e4 62%, #0a50c4 85%, #0838a8 100%);
`;
const WallArt = styled.svg`position: absolute; left: 0; top: 0;`;
const Taskbar = styled.div`height: 42px; flex: none; display: flex; align-items: center; background: #05101c; color: #ddd;`;
const WinStart = styled.div`width: 44px; height: 100%; display: flex; align-items: center; justify-content: center;`;
const SearchBox = styled.div`width: 345px; height: 100%; flex: none; background: #f2f2f2; color: #666; display: flex; align-items: center; gap: 10px; padding-left: 14px; font-size: 13px;`;
const TaskIcons = styled.div`display: flex; align-items: center; gap: 26px; padding-left: 15px;`;
const TaskTile = styled.span<{ $c: string; $sel?: boolean }>`width: 22px; height: 22px; background: ${p => p.$c}; border-radius: 3px; flex: none; ${p => p.$sel ? 'box-shadow: 0 0 0 9px #2c3f52;' : ''}`;
const SysTray = styled.div`margin-left: auto; display: flex; align-items: center; gap: 14px; padding-right: 14px; font-size: 12px;`;
const SysClock = styled.div`text-align: center; line-height: 17px; font-size: 12px;`;
const VbStatus = styled.div`height: 20px; flex: none; display: flex; align-items: center; justify-content: flex-end; gap: 2px; padding-right: 2px; background: #eee; border-bottom: 2px solid #9a9a9a; color: #666; font-size: 11px;`;
const VbTile = styled.span<{ $c: string }>`width: 14px; height: 14px; background: ${p => p.$c}; border-radius: 2px; flex: none;`;
const TrayLine = styled.span`margin-left: 4px;`;
const ExplorerWin = styled.div<{ $l: number; $t: number; $w: number; $h: number }>`
  position: absolute; left: ${p => p.$l}px; top: ${p => p.$t}px; width: ${p => p.$w}px; height: ${p => p.$h}px; background: #fff; box-shadow: 0 2px 10px rgba(0,0,0,.35); display: flex; flex-direction: column; color: #444;
`;
const ExTitle = styled.div`height: 33px; flex: none; display: flex; align-items: center; gap: 8px; padding: 0 12px 0 8px;`;
const ExCtl = styled.span`margin-left: auto; color: #555; letter-spacing: 30px; font-size: 14px; margin-right: -30px;`;
const ExTabs = styled.div`height: 28px; flex: none; display: flex; align-items: stretch; gap: 14px; border-bottom: 1px solid #e5e5e5; color: #777;`;
const ExTabOn = styled.span`width: 55px; background: #1a6fb8; color: #d8e8f5; display: flex; align-items: center; justify-content: center;`;
const ExTabOff = styled.span`display: flex; align-items: center;`;
const ExAddr = styled.div`height: 44px; flex: none; display: flex; align-items: center; gap: 10px; padding: 0 14px 0 70px; color: #555;`;
const ExAddrBox = styled.div`flex: 1.100; height: 32px; border: 1px solid #ddd; display: flex; align-items: center; padding-left: 6px; gap: 4px;`;
const ExSearchBox = styled.div`flex: 1; height: 32px; border: 1px solid #ddd; display: flex; align-items: center; padding-left: 40px; color: #888;`;
const ExMain = styled.div`flex: 1; min-height: 0; display: flex;`;
const ExTree = styled.div`width: 158px; flex: none; padding-top: 26px; border-right: 1px solid #eee;`;
const ExTreeRow = styled.div<{ $sel?: boolean; $gap?: number; $in?: boolean }>`
  height: 24px; margin-top: ${p => p.$gap || 0}px; display: flex; align-items: center; gap: 5px; padding-left: ${p => (p.$in ? 32 : 24)}px; white-space: nowrap; background: ${p => (p.$sel ? '#d9d9d9' : 'transparent')}; font-size: 12px;
`;
const Dot = styled.span<{ $c: string }>`width: 14px; height: 14px; flex: none; background: ${p => p.$c}; border-radius: 2px;`;
const ExList = styled.div`flex: 1; padding: 2px 6px 0 10px; min-width: 0;`;
const ExGroup = styled.div`height: 22px; display: flex; align-items: center; gap: 6px; color: #3a5c96; font-size: 15px; white-space: nowrap; &::after { content: ""; flex: 1; height: 1px; background: #e8e8e8; }`;
const ExGrid = styled.div`display: grid; grid-template-columns: 250px 1fr; grid-auto-rows: 56px; margin-top: 6px;`;
const ExFolder = styled.div`display: flex; gap: 12px; padding-left: 14px; font-size: 12px; white-space: nowrap;`;
const ExFolderIcon = styled.span<{ $c: string }>`width: 38px; height: 46px; flex: none; background: linear-gradient(100deg, #fbe08a 0 60%, ${p => p.$c} 60%); border-radius: 2px;`;
const ExDrive = styled.div`display: flex; gap: 8px; padding-left: 8px; height: 76px; font-size: 12px; white-space: nowrap; line-height: 16px;`;
const ExDriveIcon = styled.span<{ $c: string }>`width: 42px; height: 40px; flex: none; margin-top: 12px; background: ${p => p.$c}; border-radius: 3px;`;
const ExBar = styled.div<{ $pct: number }>`width: 190px; height: 12px; background: linear-gradient(90deg, #2b9bd8 ${p => p.$pct}%, #e6e6e6 ${p => p.$pct}%);`;
const ExStatus = styled.div`height: 26px; flex: none; display: flex; align-items: center; padding-left: 14px; font-size: 12px; gap: 20px;`;
const NextRow = styled.div`position: absolute; right: 14px; bottom: 14px; display: flex; gap: 13px;`;
const WinBtn = styled.div<{ $on?: boolean }>`width: 73px; height: 21px; display: flex; align-items: center; justify-content: center; background: ${p => (p.$on ? '#e5f1fb' : '#e1e1e1')}; border: 2px solid ${p => (p.$on ? '#0078d7' : '#d0d0d0')}; color: #444;`;
const WizardBox = styled.div`position: absolute; left: 709px; top: 400px; width: 501px; height: 269px; background: #f0f0f0; box-shadow: 0 2px 8px rgba(0,0,0,.5);`;
const Glow = styled.div`position: absolute; left: 1533px; top: 60px; width: 12px; height: 650px; background: #2fb6e8;`;
const DeskIcon = styled.div`position: absolute; left: 2px; top: 12px; width: 82px; display: flex; flex-direction: column; align-items: center; color: #f4f4f4; font-size: 12px; line-height: 15px; text-align: center;`;

const winLogo = <Svg w={18} h={18}><path d="M0 2.500L7.500 1.500V8.500H0zM8.500 1.300L18 0V8.500H8.500zM0 9.500H7.500V16.500L0 15.500zM8.500 9.500H18V18L8.500 16.700z" fill="#fff" /></Svg>;

const Desktop: React.FC<{ tasks?: TaskDef[]; clock?: string; sysClock: [string, string]; extraTile?: boolean; children?: React.ReactNode }> = ({ tasks, clock, sysClock, extraTile, children }) => (
  <Screen $bare={!tasks}>
    {tasks && <Panel tasks={tasks} clock={clock as string} />}
    {tasks && <WinTitle><MenuCaret /><WinTitleText>Windows10Sistemas [Corriendo] - Oracle VM VirtualBox</WinTitleText><WinControls /></WinTitle>}
    {tasks && <MenuBar>{['Archivo', 'Máquina', 'Ver', 'Entrada', 'Dispositivos', 'Ayuda'].map(m => <span key={m}>{m}</span>)}</MenuBar>}
    <Wallpaper>
      <WallArt width="1920" height="960" viewBox="0 0 1920 960">
        <path d="M0 120L1190 320 1190 600 0 900z" fill="#fff" opacity=".045" />
        <path d="M1190 620L0 860 0 960 800 960z" fill="#fff" opacity=".05" />
        <g transform="translate(1191 394)" fill="#39aeff" stroke="#8fdcff" strokeWidth="2">
          <path d="M0 49L148 28V172H0z" /><path d="M155 27L347 0V172H155z" /><path d="M0 182H148V326L0 308z" /><path d="M155 182H347V354L155 330z" />
        </g>
      </WallArt>
      {children}
    </Wallpaper>
    <Taskbar>
      <WinStart>{winLogo}</WinStart>
      <SearchBox>⌕ Escribe aquí para buscar.</SearchBox>
      <TaskIcons>
        <TaskTile $c="#222" /><TaskTile $c="#444" /><TaskTile $c="#1e9ad6" /><TaskTile $c="#f2c53d" /><TaskTile $c="#e6e6e6" /><TaskTile $c="#dcdcdc" />
        {extraTile && <TaskTile $c="#6f86b0" $sel />}
      </TaskIcons>
      <SysTray>
        <span>^ ▰ ▭ ◁))</span>
        <SysClock>{sysClock[0]}<br />{sysClock[1]}</SysClock>
        <Dot $c="#d5d5d5" />
      </SysTray>
    </Taskbar>
    <VbStatus>
      {['#3a80d0', '#58a4e0', '#3a80d0', '#5a9ad0', '#58a4e0', '#d0d0d0', '#3a80d0', '#3a80d0', '#6ab0d8', '#8cc152', '#3a80d0'].map((c, i) => <VbTile key={i} $c={c} />)}
      <TrayLine>Ctrl Derecho</TrayLine>
    </VbStatus>
  </Screen>
);

const TreeData: [string, string, boolean, number, boolean][] = [
  ['Acceso rápido', '#2a6fc0', false, 0, false], ['Escritorio', '#3aa0e0', true, 0, false], ['Descargas', '#2a80d0', true, 0, false], ['Documentos', '#d0d8e0', true, 0, false],
  ['Imágenes', '#8aa8c0', true, 0, false], ['Música', '#2a80d0', true, 0, false], ['Vídeos', '#555', true, 0, false], ['OneDrive', '#1a70c0', false, 8, false], ['Este equipo', '#3a9ae0', false, 9, true], ['Red', '#2a80c0', false, 8, false],
];

const ExplorerThis = () => (
  <ExplorerWin $l={233} $t={94} $w={786} $h={594}>
    <ExTitle><Dot $c="#3a9ae0" /><Dot $c="#f5e0c8" /><Dot $c="#ccd" /><span>▾ | Este equipo</span><ExCtl>—▢✕</ExCtl></ExTitle>
    <ExTabs><ExTabOn>Archivo</ExTabOn><ExTabOff>Equipo</ExTabOff><ExTabOff>Vista</ExTabOff></ExTabs>
    <ExAddr>
      <span>↑</span>
      <ExAddrBox><Dot $c="#3a9ae0" />› Este equipo ›</ExAddrBox>
      <ExSearchBox>Buscar en Este equipo</ExSearchBox>
    </ExAddr>
    <ExMain>
      <ExTree>
        {TreeData.map(([l, c, pin, gap, sel]) => (
          <ExTreeRow key={l} $gap={gap} $sel={sel} $in={pin}><Dot $c={c} />{l}</ExTreeRow>
        ))}
      </ExTree>
      <ExList>
        <ExGroup>⌄ Carpetas (7)</ExGroup>
        <ExGrid>
          {[['Descargas', '#2a80d0'], ['Documentos', '#dfe6ee'], ['Escritorio', '#2f9be6'], ['Imágenes', '#c8dcea'], ['Música', '#2a80d0'], ['Objetos 3D', '#3ab0e0'], ['Vídeos', '#5a5a70']].map(([l, c]) => (
            <ExFolder key={l}><ExFolderIcon $c={c} />{l}</ExFolder>
          ))}
        </ExGrid>
        <ExGroup>⌄ Dispositivos y unidades (2)</ExGroup>
        <ExGrid>
          <ExDrive><ExDriveIcon $c="#cfd6da" /><div>Disco local (C:)<ExBar $pct={28} />30,5 GB disponibles de 46,2 GB</div></ExDrive>
          <ExDrive><ExDriveIcon $c="#35508a" /><div>Unidad de CD (D:) VirtualBox Guest<br />Additions<br />0 bytes disponibles de 58,1 MB</div></ExDrive>
        </ExGrid>
        <ExGroup>⌄ Ubicaciones de red (1)</ExGroup>
        <ExGrid>
          <ExDrive><ExDriveIcon $c="#cfd6da" /><div>Compartido_VB (\\VBoxSvr) (Z:)<ExBar $pct={88} />10,8 GB disponibles de 135 GB</div></ExDrive>
        </ExGrid>
      </ExList>
    </ExMain>
    <ExStatus>10 elementos</ExStatus>
  </ExplorerWin>
);

const ExplorerFiles = () => (
  <>
    <Glow />
    <ExplorerWin $l={407} $t={100} $w={1126} $h={699}>
      <ExMain />
      <ExStatus><span>13 elementos</span><span>1 elemento seleccionado 204 KB</span></ExStatus>
    </ExplorerWin>
    <WizardBox>
      <NextRow><WinBtn $on>Next &gt;</WinBtn><WinBtn>Cancel</WinBtn></NextRow>
    </WizardBox>
  </>
);

/* ------------- writer ------------- */
const Writer = styled.div`width: 1080px; flex: none; height: 1920px; display: flex; flex-direction: column; background: #f6f6f6; color: #555; overflow: hidden;`;
const WrTitle = styled.div`
  height: 24px; flex: none; display: flex; align-items: center; padding: 0 5px 0 6px; background: #f4f4f4; border-top: 1px solid #9c9c9c;
`;
const WrTitleText = styled.div`flex: 1; padding-left: 6px; text-align: center; font-weight: 700; font-size: 12px; color: #666;`;
const WrMenu = styled.div`
  height: 22px; flex: none; display: flex; align-items: center; gap: 12px; padding: 0 12px 0 6px; background: #e5e5e5; border-bottom: 1px solid #c6c6c6; font-size: 12px; color: #4d4d4d;
`;
const WrMenuClose = styled.div`margin-left: auto;`;
const ToolRow = styled.div<{ $h: number }>`height: ${p => p.$h}px; flex: none; display: flex; align-items: center; background: #f3f3f3; overflow: hidden;`;
const ToolSlot = styled.div<{ $w: number; $gap: number }>`width: ${p => p.$w}px; margin-left: ${p => p.$gap}px; flex: none; display: flex; justify-content: center; align-items: center;`;
const Grip = styled.div`width: 3px; height: 24px; background: repeating-linear-gradient(to bottom, #c8c8c8 0 2px, transparent 2px 4px);`;
const Sep = styled.div`width: 1px; height: 30px; background: #d3d3d3;`;
const Combo = styled.div<{ $w: number }>`
  width: ${p => p.$w}px; height: 24px; display: flex; align-items: center; background: #fff; border: 1px solid #d2d2d2; border-radius: 3px; font-size: 12px; color: #444; white-space: nowrap;
`;
const ComboText = styled.div`flex: 1; padding-left: 7px; overflow: hidden;`;
const ComboArrow = styled.div`width: 25px; height: 100%; flex: none; border-left: 1px solid #d2d2d2; display: flex; align-items: center; justify-content: center;`;
const Glyph = styled.span<{ $i?: boolean; $u?: boolean }>`
  font-weight: 700; font-size: 22px; line-height: 26px; color: #444; font-style: ${p => (p.$i ? 'italic' : 'normal')}; ${p => (p.$u ? 'border-bottom: 2.500px solid #444; line-height: 22px;' : '')}
`;
const ActiveBtn = styled.div`width: 31px; height: 34px; display: flex; align-items: center; justify-content: center; background: #1f6edb; border-radius: 3px; box-shadow: 0 -1px 1px #9cb;`;

type Tool = { at: number; w: number; el: React.ReactNode };
const ToolStrip: React.FC<{ h: number; tools: Tool[] }> = ({ h, tools }) => {
  let x = 1920;
  return (
    <ToolRow $h={h}>
      {tools.map((t, i) => {
        const left = t.at - t.w / 2;
        const gap = left - x;
        x = left + t.w;
        return <ToolSlot key={i} $w={t.w} $gap={gap}>{t.el}</ToolSlot>;
      })}
    </ToolRow>
  );
};
const tl = (at: number, w: number, el: React.ReactNode): Tool => ({ at, w, el });
const sep = (at: number): Tool => tl(at, 1, <Sep />);
const arr = (at: number): Tool => tl(at, 10, I.caret);
const arrG = (at: number): Tool => tl(at, 10, I.caretGrey);

const row1: Tool[] = [
  tl(1924, 3, <Grip />), tl(1947, 18, I.newDoc), arr(1970), tl(1991, 22, I.open), arr(2013.5), tl(2035, 18, I.save), arr(2057.5), sep(2068),
  tl(2089, 16, I.pdf), tl(2122, 22, I.print), tl(2155.5, 18, I.preview), sep(2175), tl(2196, 16, I.cut), tl(2229, 18, I.copy), tl(2260, 18, I.paste), arr(2282.5), sep(2293),
  tl(2314, 20, I.brush), sep(2334), tl(2352, 18, I.undo), arr(2375), tl(2397, 18, I.redo), arrG(2420), sep(2431), tl(2452, 22, I.find), tl(2484, 26, I.spell), tl(2517, 16, I.pilcrow), sep(2537),
  tl(2556, 23, I.table), arr(2578), tl(2602, 22, I.image), tl(2635, 20, I.chart), tl(2668, 24, I.box), sep(2688), tl(2709, 24, I.pb), tl(2740, 20, I.field), arr(2763), tl(2784, 20, I.omega), arr(2807), sep(2817),
  tl(2839, 23, I.link), tl(2872, 20, I.footnote), tl(2904, 21, I.endnote), tl(2937, 22, I.star), tl(2992, 18, I.more),
];
const row2: Tool[] = [
  tl(2000, 152, <Combo $w={152}><ComboText>Estilo de párrafo pre</ComboText><ComboArrow>{I.caret}</ComboArrow></Combo>),
  tl(2094.5, 25, I.updStyle), tl(2128, 24, I.newStyle), sep(2147.5),
  tl(2227, 152, <Combo $w={152}><ComboText>Liberation Serif</ComboText><ComboArrow>{I.caret}</ComboArrow></Combo>),
  tl(2352, 80, <Combo $w={80}><ComboText>12 pt</ComboText><ComboArrow>{I.caret}</ComboArrow></Combo>), sep(2397.5),
  tl(2418.5, 20, <Glyph>N</Glyph>), tl(2450.5, 20, <Glyph $i>K</Glyph>), tl(2485, 20, <Glyph $u>S</Glyph>), tl(2517, 19, I.strike), sep(2537),
  tl(2557, 23, I.sup), tl(2591, 25, I.sub), sep(2612), tl(2633.5, 22, I.clear), sep(2652), tl(2671, 24, I.color), arr(2693), tl(2715, 24, I.high), arr(2737), sep(2748),
  tl(2768.5, 31, <ActiveBtn><Svg w={20} h={18}><path d="M0 2h20M0 7h20M0 12h20M0 17h12" stroke="#2a3f66" strokeWidth="2" /></Svg></ActiveBtn>),
  tl(2802.5, 20, <Svg w={20} h={18}><path d="M0 2h20M3 7h14M0 12h20M5 17h10" stroke="#444" strokeWidth="2" /></Svg>),
  tl(2835, 20, <Svg w={20} h={18}><path d="M0 2h20M6 7h14M0 12h20M8 17h12" stroke="#444" strokeWidth="2" /></Svg>),
  tl(2868, 20, <Svg w={20} h={18}><path d="M0 2h20M0 7h20M0 12h20M0 17h20" stroke="#444" strokeWidth="2" /></Svg>), sep(2888),
  tl(2906.5, 20, I.bullets), arr(2929), tl(2950.5, 20, I.numbers), arr(2973), tl(2992, 18, I.more),
];

const WrBody = styled.div`flex: 1; min-height: 0; display: flex;`;
const WrLeft = styled.div`width: 1024px; flex: none; display: flex; flex-direction: column;`;
const RulerRow = styled.div`height: 25px; flex: none;`;
const Viewport = styled.div`flex: 1; min-height: 0; overflow: hidden; padding-left: 103px; background: #f6f6f6;`;
const Page = styled.div<{ $h: number; $top?: boolean }>`
  width: 817px; height: ${p => p.$h}px; margin-top: ${p => (p.$top ? 17 : 0)}px; background: #fff; display: flex; flex-direction: column; padding: 0 75px;
  border: 1px solid #b8b8b8; ${p => (p.$top ? '' : 'border-top: none;')} box-shadow: 1px 1px 2px #bbb; color: #000;
`;
const ScrollTrack = styled.div`width: 9px; flex: none; background: #cdcdcd; padding: 1404px 2px 0;`;
const ScrollThumb = styled.div`height: 354px; background: #808486; border-radius: 2px 2px 0 0;`;
const DeckStrip = styled.div`width: 6px; flex: none; background: #fff; border-left: 1px solid #aaa; border-right: 1px solid #aaa; padding-top: 850px;`;
const DeckHandle = styled.div`width: 7px; height: 70px; margin-left: -1px; background: #9a9c9c; display: flex; align-items: center;`;
const Deck = styled.div`flex: 1; display: flex; flex-direction: column; align-items: center; padding-top: 9px; background: #f6f6f6;`;
const DeckRule = styled.div`width: 22px; height: 1px; background: #e2e2e2; margin-top: 8px;`;
const DeckBtn = styled.div<{ $box?: boolean }>`
  width: 31px; height: 31px; display: flex; align-items: center; justify-content: center; margin-top: ${p => (p.$box ? 3 : 4)}px; border-radius: 3px; ${p => (p.$box ? 'border: 1px solid #c9c9c9;' : '')}
`;
const Serif = styled.div`font-family: "Liberation Serif", serif; font-size: 16px; line-height: 18px; color: #000;`;
const Para = styled(Serif)<{ $mt: number }>`margin-top: ${p => p.$mt}px; white-space: nowrap; flex: none;`;
const Heading = styled(Para)`font-weight: 700; text-decoration: underline;`;
const Squiggle = styled.span`text-decoration: underline wavy #e02020; text-decoration-thickness: 1px; text-underline-offset: 1px;`;
const CropRow = styled.div<{ $mt: number }>`flex: none; display: flex; justify-content: space-between; margin: ${p => p.$mt}px -12px 0 -12px;`;
const Crop = styled.div<{ $side: 'l' | 'r'; $v: 't' | 'b' }>`
  width: 12px; height: 12px; flex: none; border: 0 solid #b5b5b5;
  ${p => (p.$side === 'l' ? 'border-right-width: 1px;' : 'border-left-width: 1px;')}
  ${p => (p.$v === 'b' ? 'border-top-width: 1px;' : 'border-bottom-width: 1px;')}
`;
const WrStatus = styled.div`height: 25px; flex: none; display: flex; align-items: center; background: #f5f5f5; border-top: 1px solid #aaa; font-size: 12px; color: #4d4d4d;`;
const SCell = styled.div<{ $w?: number; $grow?: boolean; $pl?: number }>`
  ${p => (p.$grow ? 'flex: 1;' : `width: ${p.$w}px; flex: none;`)} height: 20px; display: flex; align-items: center; gap: 6px; padding-left: ${p => (p.$pl ?? 10)}px; border-right: 1px solid #dcdcdc; white-space: nowrap;
`;
const SCellEnd = styled(SCell)`border-right: none;`;

const rulerNums = [1, 2, 3, 4, 5, 6, 7, 8, 9, 10, 11, 12, 13, 14, 15, 16, 17, 18, 19];
const Ruler = () => (
  <svg width="1024" height="25" viewBox="0 0 1024 25">
    <path d="M8.500 9v7.500H15" fill="none" stroke="#777" strokeWidth="2" />
    <rect x="104.500" y="4.500" width="815" height="15" fill="#f3f3f3" stroke="#b5b5b5" />
    <rect x="177" y="4" width="668" height="16" fill="#fff" />
    <text x="142" y="16" fontFamily="Noto Sans" fontSize="11" textAnchor="middle" fill="#aeaeae">1</text>
    {rulerNums.map(n => (
      <text key={n} x={180 + n * 37.8} y="16" fontFamily="Noto Sans" fontSize="11" textAnchor="middle" fill="#a5a5a5">{n}</text>
    ))}
    {Array.from({ length: 22 }, (_, i) => i).map(i => (
      <path key={i} d={`M${123.500 + i * 37.8} 10v4`} stroke="#b0b0b0" />
    ))}
    {Array.from({ length: 19 }, (_, i) => i).map(i => i === 9 ? null : (
      <path key={i} d={`M${228 + i * 47.25} 17v3M${225 + i * 47.25} 20.500h6`} stroke="#999" fill="none" />
    ))}
    <path d="M175 4.500h12l-6 7.500 6 7.500h-12l6-7.500z" fill="#fff" stroke="#9b9b9b" />
    <path d="M845 13l5 4v3h-10v-3z" fill="#fff" stroke="#9b9b9b" />
  </svg>
);

/* ------------- page ------------- */
const Root = styled.div`width: 3000px; height: 1920px; display: flex; background: #000;`;
const LeftCol = styled.div`width: 1920px; flex: none; display: flex; flex-direction: column;`;
const BlackSpace = styled.div<{ $h: number }>`height: ${p => p.$h}px; flex: none; background: #000;`;

const mainTasks: TaskDef[] = [
  { icon: ffIcon, label: '[Tarea - Mozilla Firefox]' },
  { icon: docIcon, label: 'Tarea SI01.odt - LibreOffice ...', active: true },
  { icon: greyFolder, label: 'Windows10Sistemas - Gesto...' },
];
const shot2Tasks: TaskDef[] = [
  { icon: ffIcon, label: '[9.6.- PASO 6. Instalar las Gu...' },
  { icon: docIcon, label: 'Tarea SI01.odt - LibreOffice ...' },
  { icon: vmIcon, label: 'Oracle VM VirtualBox Admini...' },
  { icon: termIcon, label: '[Terminal - pakels@Pakels-...' },
  { icon: dlIcon, label: 'Descargas - Gestor de archi...' },
  { icon: greyFolder, label: '[SI01 - Gestor de archivos]' },
  { icon: greyFolder, label: 'DAM - Gestor de archivos' },
];
const shot3Tasks: TaskDef[] = [
  { icon: ffIcon, label: 'Anexo - Licencias de recurso...' },
  { icon: docIcon, label: 'Tarea SI01.odt - LibreOffice ...', active: true },
  { icon: vmIcon, label: 'Oracle VM VirtualBox Admini...' },
  { icon: vmIcon, label: 'Windows10Sistemas [Corrie...' },
  { icon: termIcon, label: 'Terminal - pakels@Pakels-M...' },
  { icon: dlIcon, label: 'Descargas - Gestor de archi...' },
  { icon: greyFolder, label: '[SI01 - Gestor de archivos]' },
  { icon: greyFolder, label: 'DAM - Gestor de archivos' },
];

export default function App() {
  return (
    <Root>
      <Global />
      <LeftCol>
        <BlackSpace $h={405} />
        <FileManager
          tasks={mainTasks} clock="29 oct, 16:31" title="Windows10Sistemas - Gestor de archivos"
          path="/home/pakels/VirtualBox VMs/Windows10Sistemas/" pathIcon={greyFolder} side={mainSide}
          files={[
            { i: 'folder', l: 'Logs' }, { i: 'vbox', l: 'Windows10Sistemas.v\nbox' }, { i: 'prev', l: 'Windows10Sistemas.v\nbox-prev' }, { i: 'vdi', l: 'Windows10Sistemas.v\ndi', sel: true },
          ]}
          status="«Windows10Sistemas.vdi»: 12,1 GiB (13.008.633.856 bytes) Virtual Disk Image"
        />
        <BlackSpace $h={435} />
      </LeftCol>

      <Writer>
        <WrTitle><MenuCaret /><WrTitleText>Tarea SI01.odt - LibreOffice Writer</WrTitleText><WinControls c="#7a7a7a" /></WrTitle>
        <WrMenu>
          {['Archivo', 'Editar', 'Ver', 'Insertar', 'Formato', 'Estilos', 'Tabla', 'Formulario', 'Herramientas', 'Ventana', 'Ayuda'].map(m => <span key={m}>{m}</span>)}
          <WrMenuClose><Svg w={9} h={9}><path d="M1 1l7 7M8 1L1 8" stroke="#333" strokeWidth="2.200" /></Svg></WrMenuClose>
        </WrMenu>
        <ToolStrip h={40} tools={row1} />
        <ToolStrip h={39} tools={row2} />
        <WrBody>
          <WrLeft>
            <RulerRow><Ruler /></RulerRow>
            <Viewport>
              <Page $h={701}>
                <Shot $w={664} $h={132} $ml={15}>
                  <ShotInner $shift={-243}>
                    <Desktop sysClock={['20:41', '27/10/2020']} extraTile><ExplorerFiles /></Desktop>
                  </ShotInner>
                </Shot>
                <Para $mt={49}>4. Configurar una carpeta compartida</Para>
                <Shot $w={665} $h={375} $mt={18}>
                  <ShotInner>
                    <FileManager
                      tasks={shot2Tasks} clock="27 oct, 20:44" title="Descargas - Gestor de archivos"
                      path="/home/pakels/Descargas/" pathIcon={dlIcon} side={miniSide} files={miniFiles}
                      status="34 elementos: 15,4 GiB (16.578.373.076 bytes), espacio libre: 29,3 GiB"
                    >
                      <SettingsOverlay />
                    </FileManager>
                  </ShotInner>
                </Shot>
                <CropRow $mt={33}><Crop $side="l" $v="b" /><Crop $side="r" $v="b" /></CropRow>
              </Page>
              <Page $h={1127} $top>
                <CropRow $mt={65}><Crop $side="l" $v="t" /><Crop $side="r" $v="t" /></CropRow>
                <Shot $w={665} $h={375} $mt={22}>
                  <ShotInner>
                    <Desktop tasks={shot3Tasks} clock="27 oct, 20:47" sysClock={['20:47', '27/10/2020']}>
                      <DeskIcon><Svg w={34} h={44}><path d="M10 2l20 6v24L10 26z" fill="#a8d4f0" /><path d="M2 34l22 4-4 4-16-2z" fill="#e8e8e8" /></Svg>Este equipo - Acceso directo</DeskIcon>
                      <ExplorerThis />
                    </Desktop>
                  </ShotInner>
                </Shot>
                <Heading $mt={56}>Actividad 5</Heading>
                <Para $mt={19}>1. El archivo <Squiggle>.vdi</Squiggle> ocupa 12,1GB.</Para>
                <CropRow $mt={396}><Crop $side="l" $v="b" /><Crop $side="r" $v="b" /></CropRow>
              </Page>
            </Viewport>
          </WrLeft>
          <ScrollTrack><ScrollThumb /></ScrollTrack>
          <DeckStrip>
            <DeckHandle><Svg w={6} h={8}><path d="M0 0l6 4-6 4z" fill="#eee" /></Svg></DeckHandle>
          </DeckStrip>
          <Deck>
            {I.gear}
            <DeckRule />
            <DeckBtn>{I.toggle}</DeckBtn>
            <DeckBtn>{I.page}</DeckBtn>
            <DeckBtn>{I.deckStyle}</DeckBtn>
            <DeckBtn>{I.gallery}</DeckBtn>
            <DeckBtn $box>{I.nav}</DeckBtn>
          </Deck>
        </WrBody>
        <WrStatus>
          <SCell $w={97}>Página 8 de 8</SCell>
          <SCell $w={195}>294 palabras, 1.666 caracteres</SCell>
          <SCell $w={202}>Estilo de página predeterminado</SCell>
          <SCell $w={31}><Svg w={15} h={14}><path d="M1 1h4M3 1v12M1 13h4M8 12v1.500h6V12" stroke="#888" fill="none" /></Svg></SCell>
          <SCell $w={29}><Svg w={11} h={14}><rect x=".5" y=".5" width="10" height="13" fill="#f0f0f0" stroke="#aaa" /><path d="M5.500 11L2 7h2V3h3v4h2z" fill="#e8772e" /></Svg></SCell>
          <SCell $w={30} />
          <SCell $grow />
          <SCell $w={77} $pl={11}>
            <Svg w={54} h={14}><path d="M.5.5h4l2 2v11h-6z" fill="none" stroke="#e8842e" /><path d="M13.500.5h7v13h-7zM22.500.5h7v13h-7z" fill="none" stroke="#aaa" /><path d="M38 2c2-1.500 4-1.500 7 0v11c-3-1.500-5-1.500-7 0zM45 2c3-1.500 5-1.500 7 0v11c-2-1.500-4-1.500-7 0z" fill="none" stroke="#aaa" /></Svg>
          </SCell>
          <SCell $w={144} $pl={8}>
            <Svg w={126} h={14}><path d="M0 7h8M116 7h10M121 2v10" stroke="#9a9a9a" strokeWidth="1.500" /><rect x="15" y="6" width="97" height="2" fill="#b5b5b5" /><circle cx="62" cy="7" r="4.500" fill="#f4f4f4" stroke="#888" /></Svg>
          </SCell>
          <SCellEnd $w={52} $pl={7}>100 %</SCellEnd>
        </WrStatus>
      </Writer>
    </Root>
  );
}
